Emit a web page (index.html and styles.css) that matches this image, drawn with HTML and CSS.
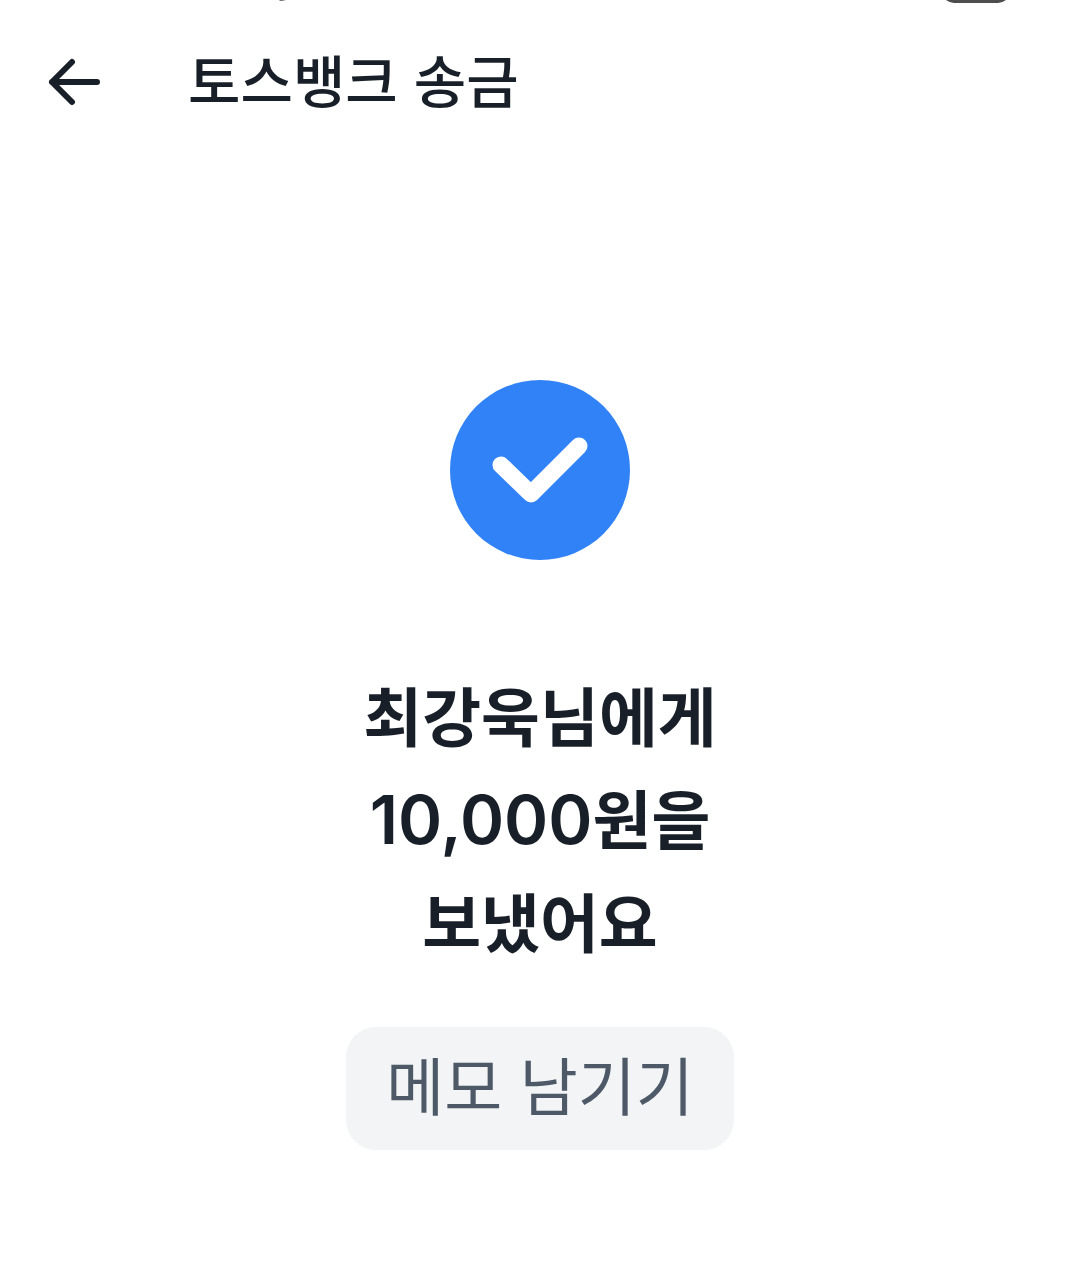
FILE: index.html
```html
<!DOCTYPE html>
<html lang="ko">
<head>
  <meta charset="UTF-8">
  <meta name="viewport" content="width=device-width, initial-scale=1.0">
  <title>토스뱅크 송금</title>
  <link rel="stylesheet" href="styles.css">
</head>
<body>
  <div class="status-bar">
    <svg width="8" height="2" viewBox="0 0 8 2"><path d="M1 0h7L4 1H2z" fill="#777"/></svg>
    <svg width="64" height="3" viewBox="0 0 64 3"><path d="M2 0h60q-4 3-8 3H10q-4 0-8-3z" fill="#4d4d4d"/></svg>
  </div>
  <header class="header">
    <button type="button" class="back-button" aria-label="뒤로">
      <svg width="52" height="48" viewBox="0 0 52 48" fill="none" stroke="#191f28" stroke-width="6" stroke-linecap="round" stroke-linejoin="round">
        <path d="M24 4L4 24l20 20M4 24h45"/>
      </svg>
    </button>
    <h1>토스뱅크 송금</h1>
  </header>

  <main class="result">
    <svg class="check" width="180" height="180" viewBox="0 0 180 180" fill="none">
      <circle cx="90" cy="90" r="90" fill="#3182f6"/>
      <path d="M51 85l30 29 48-48" stroke="#fff" stroke-width="17" stroke-linecap="round" stroke-linejoin="round"/>
    </svg>
    <p class="message">최강욱님에게<br><span class="amount">10,000</span>원을<br>보냈어요</p>
    <button type="button" class="memo-button">메모 남기기</button>
  </main>
</body>
</html>
```
FILE: styles.css
```css
body {
  font-family: "Noto Sans CJK KR", sans-serif;
  margin: 0;
  background-color: #fff;
  color: #191f28;
}
button {
  border: none;
  font-family: inherit;
  cursor: pointer;
}
.status-bar {
  display: flex;
  justify-content: space-between;
  align-items: flex-start;
  height: 3px;
  padding: 0 72px 0 278px;
}
.header {
  display: flex;
  align-items: center;
  gap: 88px;
  height: 157px;
  padding: 0 48px;
}
.back-button {
  display: flex;
  padding: 0;
  background: none;
}
h1 {
  margin: 0;
  padding-bottom: 8px;
  font-size: 57px;
  line-height: 80px;
  font-weight: 500;
}
.result {
  display: flex;
  flex-direction: column;
  align-items: center;
  padding: 220px 24px 118px;
}
.message {
  margin: 102px 0 56px;
  font-size: 64px;
  line-height: 103px;
  font-weight: 600;
  text-align: center;
}
.amount {
  font-family: Inter, sans-serif;
  font-size: 67px;
  line-height: 1;
}
.memo-button {
  padding: 0 40px 11px;
  border-radius: 30px;
  background-color: #f2f4f6;
  color: #4e5968;
  font-size: 63px;
  line-height: 112px;
}
```
